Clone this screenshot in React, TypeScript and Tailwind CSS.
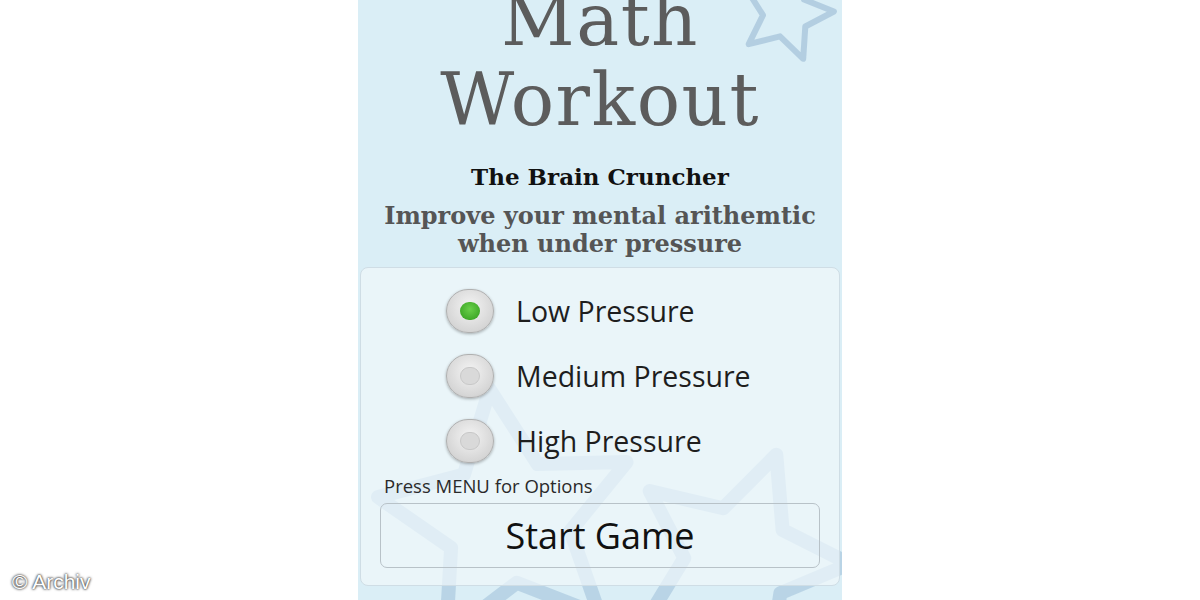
import React from 'react';

const serif = { fontFamily: '"DejaVu Serif", "Liberation Serif", serif' };
const sans = { fontFamily: '"Open Sans", "Noto Sans", sans-serif' };

// five-pointed star outline, centred on (cx, cy)
function starPoints(cx: number, cy: number, r: number, rot: number) {
  const pts: string[] = [];
  for (let i = 0; i < 10; i++) {
    const rad = i % 2 === 0 ? r : r * 0.48;
    const a = ((rot + i * 36 - 90) * Math.PI) / 180;
    pts.push(`${(cx + rad * Math.cos(a)).toFixed(1)},${(cy + rad * Math.sin(a)).toFixed(1)}`);
  }
  return pts.join(' ');
}

function Stars() {
  return (
    <svg className="absolute inset-0 pointer-events-none" width="484" height="600" viewBox="0 0 484 600">
      <polygon points={starPoints(428, 14, 48, 15)} fill="none" stroke="#a3c1d8" strokeWidth="6" strokeLinejoin="round" opacity="0.7" />
      <polygon points={starPoints(150, 520, 132, -8)} fill="none" stroke="#9fc0d8" strokeWidth="14" strokeLinejoin="round" opacity="0.55" />
      <polygon points={starPoints(380, 560, 112, 20)} fill="none" stroke="#9fc0d8" strokeWidth="14" strokeLinejoin="round" opacity="0.55" />
    </svg>
  );
}

function Radio({ checked }: { checked?: boolean }) {
  return (
    <div className="w-[48px] h-[44px] rounded-full border border-[#b0b0b0] bg-[radial-gradient(circle_at_50%_40%,#f4f4f4,#d6d6d6_70%,#b8b8b8)] shadow-[0_1px_3px_rgba(0,0,0,0.3)] flex items-center justify-center shrink-0">
      {checked ? (
        <div className="w-[20px] h-[18px] rounded-full bg-[radial-gradient(circle_at_50%_40%,#6ad04a,#2f9a1c)]" />
      ) : (
        <div className="w-[20px] h-[18px] rounded-full border border-[#c8c8c8] bg-[#d9d9d9]" />
      )}
    </div>
  );
}

const levels = [
  { label: 'Low Pressure', checked: true },
  { label: 'Medium Pressure' },
  { label: 'High Pressure' },
];

export default function App() {
  return (
    <div className="relative w-[1200px] h-[600px] bg-white overflow-hidden">
      <div className="relative mx-auto w-[484px] h-[600px] bg-[#daeef6] overflow-hidden">
        <Stars />
        <div className="relative flex flex-col items-center">
          <div className="text-[72px] leading-[80px] tracking-[1.5px] text-[#5c5c5c] text-center mt-[-20px]" style={serif}>
            Math
            <br />
            Workout
          </div>
          <div className="mt-[24px] text-[23px] leading-[26px] font-bold text-[#111]" style={serif}>
            The Brain Cruncher
          </div>
          <div className="mt-[12px] text-[24px] leading-[28px] font-bold text-[#555] text-center" style={serif}>
            Improve your mental arithemtic
            <br />
            when under pressure
          </div>
        </div>
        <div className="relative mx-[2px] mt-[9px] rounded-[8px] border border-[#cfdde5] bg-[#f1f8fb]/70 px-[19px] pt-[21px] pb-[17px]">
          <div className="flex flex-col gap-[21px] pl-[66px]">
            {levels.map((l) => (
              <div key={l.label} className="flex items-center gap-[22px]">
                <Radio checked={l.checked} />
                <span className="text-[28.5px] leading-[40px] text-[#1e1e1e]" style={sans}>
                  {l.label}
                </span>
              </div>
            ))}
          </div>
          <div className="mt-[12px] pl-[4px] text-[18.5px] leading-[22px] text-[#2a2a2a]" style={sans}>
            Press MENU for Options
          </div>
          <div className="mt-[6px] h-[65px] rounded-[7px] border border-[#b8c2c8] flex items-center justify-center text-[36px] text-[#111]" style={sans}>
            Start Game
          </div>
        </div>
      </div>
      <div
        className="absolute left-[12px] top-[566px] text-[21px] text-white"
        style={{ fontFamily: '"Liberation Sans", Arial, sans-serif', textShadow: '0 0 3px #333, 0 0 2px #333' }}
      >
        © Archiv
      </div>
    </div>
  );
}
